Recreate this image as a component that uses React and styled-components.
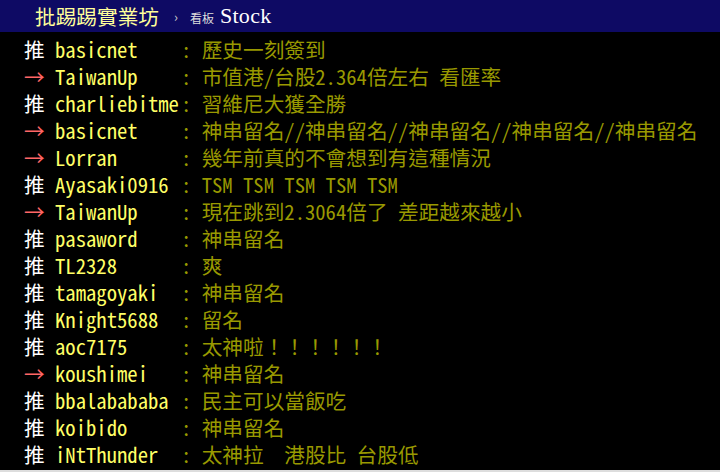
import React from 'react';
import styled, { createGlobalStyle } from 'styled-components';

const GlobalStyle = createGlobalStyle`
  html, body { margin: 0; padding: 0; background: #000; }
  body { width: 720px; height: 472px; overflow: hidden; }
`;

const CJK = `"Noto Sans Mono CJK TC", "Noto Sans CJK TC", "Noto Sans CJK JP", monospace`;

const Page = styled.div`
  width: 720px;
  height: 472px;
  background: #000;
  display: flex;
  flex-direction: column;
  overflow: hidden;
  font-family: ${CJK};
  font-size: 20.67px;
`;

const TopBar = styled.div`
  height: 32px;
  flex-shrink: 0;
  background: #0e0a64;
  display: flex;
  align-items: center;
  padding-left: 35px;
  white-space: nowrap;
`;

const Logo = styled.span`
  color: #ffff9a;
  font-size: 20.67px;
  line-height: 1;
`;

const Crumb = styled.span`
  color: #ccc;
  font-size: 13px;
  margin-left: 15px;
  line-height: 1;
`;

const Board = styled.span`
  display: flex;
  align-items: baseline;
  margin-left: 12px;
`;

const BoardLabel = styled.span`
  color: #ddd;
  font-size: 12px;
  margin-right: 6px;
`;

const BoardName = styled.span`
  color: #fff;
  font-family: "Liberation Serif", serif;
  font-size: 22px;
  letter-spacing: 0.3px;
`;

const Main = styled.div`
  flex: 1;
  padding: 4px 0 0 24px;
  display: flex;
  flex-direction: column;
`;

const Push = styled.div`
  height: 27px;
  line-height: 27px;
  display: flex;
  white-space: nowrap;
`;

const Tag = styled.span`
  width: 31px;
  flex-shrink: 0;
  color: ${(p) => (p.$arrow ? '#f66' : '#fff')};
`;

const UserId = styled.span`
  width: 126px;
  flex-shrink: 0;
  color: #ff6;
`;

const Content = styled.span`
  color: #990;
`;

const BottomEdge = styled.div`
  height: 2px;
  flex-shrink: 0;
  background: #ddd;
`;

const pushes = [
  ['推', 'basicnet', '歷史一刻簽到'],
  ['→', 'TaiwanUp', '市值港/台股2.364倍左右 看匯率'],
  ['推', 'charliebitme', '習維尼大獲全勝'],
  ['→', 'basicnet', '神串留名//神串留名//神串留名//神串留名//神串留名'],
  ['→', 'Lorran', '幾年前真的不會想到有這種情況'],
  ['推', 'Ayasaki0916', 'TSM TSM TSM TSM TSM'],
  ['→', 'TaiwanUp', '現在跳到2.3064倍了 差距越來越小'],
  ['推', 'pasaword', '神串留名'],
  ['推', 'TL2328', '爽'],
  ['推', 'tamagoyaki', '神串留名'],
  ['推', 'Knight5688', '留名'],
  ['推', 'aoc7175', '太神啦！！！！！！'],
  ['→', 'koushimei', '神串留名'],
  ['推', 'bbalabababa', '民主可以當飯吃'],
  ['推', 'koibido', '神串留名'],
  ['推', 'iNtThunder', '太神拉　港股比 台股低'],
];

export default function App() {
  return (
    <>
      <GlobalStyle />
      <Page>
        <TopBar>
          <Logo>批踢踢實業坊</Logo>
          <Crumb>›</Crumb>
          <Board>
            <BoardLabel>看板</BoardLabel>
            <BoardName>Stock</BoardName>
          </Board>
        </TopBar>
        <Main>
          {pushes.map(([tag, user, text], i) => (
            <Push key={i}>
              <Tag $arrow={tag === '→'}>{tag}</Tag>
              <UserId>{user}</UserId>
              <Content>: {text}</Content>
            </Push>
          ))}
        </Main>
        <BottomEdge />
      </Page>
    </>
  );
}
